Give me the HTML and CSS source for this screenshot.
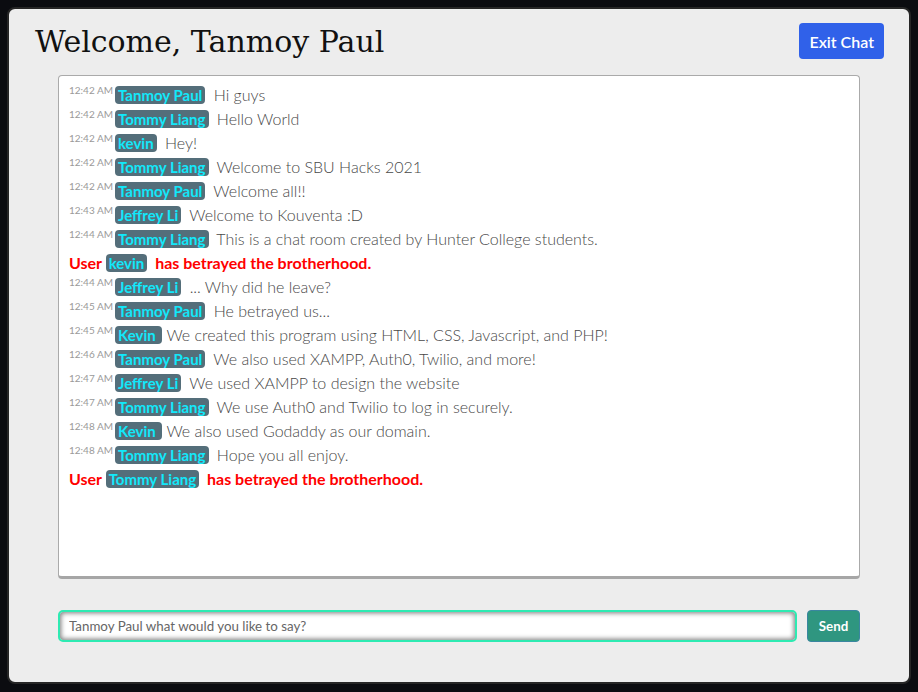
FILE: index.html
```html
<!DOCTYPE html>
<html lang="en">
<head>
<meta charset="utf-8">
<title>Kouventa Chat</title>
<link rel="stylesheet" href="styles.css">
</head>
<body>
<div class="page">
  <div class="panel">
    <header class="header">
      <h1 class="title">Welcome, Tanmoy Paul</h1>
      <button class="exit">Exit Chat</button>
    </header>
    <div class="chat">
      <div class="msg"><span class="time">12:42 AM</span><span class="name">Tanmoy Paul</span> Hi guys</div>
      <div class="msg"><span class="time">12:42 AM</span><span class="name">Tommy Liang</span> Hello World</div>
      <div class="msg"><span class="time">12:42 AM</span><span class="name">kevin</span> Hey!</div>
      <div class="msg"><span class="time">12:42 AM</span><span class="name">Tommy Liang</span> Welcome to SBU Hacks 2021</div>
      <div class="msg"><span class="time">12:42 AM</span><span class="name">Tanmoy Paul</span> Welcome all!!</div>
      <div class="msg"><span class="time">12:43 AM</span><span class="name">Jeffrey Li</span> Welcome to Kouventa :D</div>
      <div class="msg"><span class="time">12:44 AM</span><span class="name">Tommy Liang</span> This is a chat room created by Hunter College students.</div>
      <div class="msg sys">User <span class="name">kevin</span> has betrayed the brotherhood.</div>
      <div class="msg"><span class="time">12:44 AM</span><span class="name">Jeffrey Li</span> ... Why did he leave?</div>
      <div class="msg"><span class="time">12:45 AM</span><span class="name">Tanmoy Paul</span> He betrayed us...</div>
      <div class="msg"><span class="time">12:45 AM</span><span class="name">Kevin </span>We created this program using HTML, CSS, Javascript, and PHP!</div>
      <div class="msg"><span class="time">12:46 AM</span><span class="name">Tanmoy Paul</span> We also used XAMPP, Auth0, Twilio, and more!</div>
      <div class="msg"><span class="time">12:47 AM</span><span class="name">Jeffrey Li</span> We used XAMPP to design the website</div>
      <div class="msg"><span class="time">12:47 AM</span><span class="name">Tommy Liang</span> We use Auth0 and Twilio to log in securely.</div>
      <div class="msg"><span class="time">12:48 AM</span><span class="name">Kevin </span>We also used Godaddy as our domain.</div>
      <div class="msg"><span class="time">12:48 AM</span><span class="name">Tommy Liang</span> Hope you all enjoy.</div>
      <div class="msg sys">User <span class="name">Tommy Liang</span> has betrayed the brotherhood.</div>
    </div>
    <form class="composer">
      <input class="input" type="text" placeholder="Tanmoy Paul what would you like to say?">
      <button class="send" type="button">Send</button>
    </form>
  </div>
</div>
</body>
</html>
```

FILE: styles.css
```css
html, body {
  margin: 0;
  padding: 0;
}

body {
  background: #0b0c10;
  font-family: Lato, "Open Sans", sans-serif;
}

.page {
  padding: 7px;
}

.panel {
  width: 900px;
  height: 673px;
  background: #ededed;
  border: 2px solid #262626;
  border-radius: 8px;
  display: flex;
  flex-direction: column;
}

.header {
  display: flex;
  justify-content: space-between;
  align-items: center;
  padding: 14px 25px 0 26px;
}

.title {
  margin: 0;
  font-family: "DejaVu Serif", serif;
  font-weight: 400;
  font-size: 30px;
  color: #111;
}

.exit {
  height: 36px;
  padding: 0 10px;
  border: none;
  border-radius: 4px;
  background: #3061e9;
  color: #fff;
  font-family: Lato, sans-serif;
  font-size: 16px;
  font-weight: 600;
}

.chat {
  margin: 16px 49px 0;
  height: 504px;
  box-sizing: border-box;
  background: #fff;
  border: 1px solid #aaa;
  border-bottom: 3px solid #a6a6a6;
  border-radius: 4px;
  padding: 7px 10px;
  overflow: hidden;
}

.msg {
  font-size: 16px;
  font-weight: 300;
  line-height: 24px;
  color: #484848;
  white-space: nowrap;
}

.time {
  display: inline-block;
  vertical-align: top;
  font-size: 10px;
  font-weight: 400;
  line-height: 14px;
  color: #9a9a9a;
  margin-right: 2px;
}

.name {
  background: #546e7a;
  color: #12e8fa;
  font-size: 15px;
  font-weight: 700;
  padding: 0 3px;
  border-radius: 4px;
  margin-right: 4px;
}

.sys {
  color: #ff0000;
  font-weight: 700;
}

.composer {
  display: flex;
  gap: 10px;
  margin: 31px 49px 0;
}

.input {
  flex: 1;
  height: 32px;
  box-sizing: border-box;
  border: 2px solid #2eeab2;
  border-radius: 5px;
  box-shadow: inset 0 0 5px 1px #7a7a7a;
  padding: 0 9px;
  font-family: Lato, sans-serif;
  font-size: 13.333px;
  color: #444;
  background: #fff;
}

.input::placeholder {
  color: #666;
}

.send {
  width: 53px;
  height: 32px;
  border: 1px solid #3a86a0;
  border-radius: 4px;
  background: #2f9680;
  color: #fff;
  font-family: Lato, sans-serif;
  font-size: 13.333px;
  font-weight: 700;
}
```
